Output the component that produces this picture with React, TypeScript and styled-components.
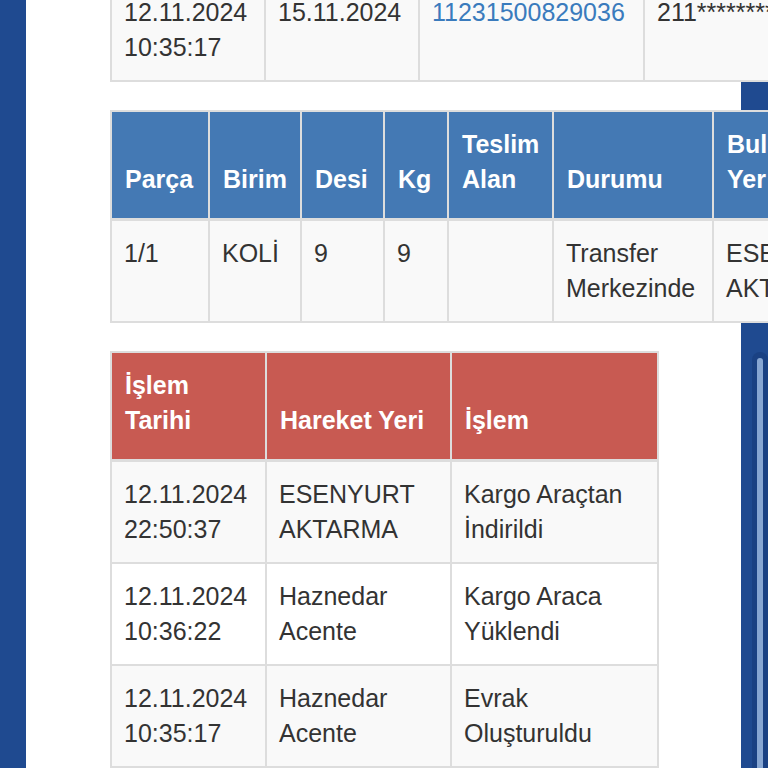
import React from "react";
import styled, { createGlobalStyle } from "styled-components";

const GlobalStyle = createGlobalStyle`
  html, body {
    margin: 0;
    padding: 0;
    overflow: hidden;
  }
  body {
    background: #1f4a90;
    font-family: "Liberation Sans", Arial, Helvetica, sans-serif;
    color: #333;
  }
  * { box-sizing: border-box; }
`;

const Page = styled.div`
  display: flex;
  width: 768px;
  height: 768px;
  overflow: hidden;
  background: #1f4a90;
`;

const LeftRail = styled.div`
  flex: 0 0 26px;
`;

const Main = styled.main`
  flex: 0 0 715px;
  min-width: 0;
  margin-top: -22px;
  padding-left: 84px;
  background: #ffffff;
  display: flex;
  flex-direction: column;
  align-items: flex-start;
  gap: 28px;
`;

const RightArea = styled.aside`
  flex: 1 1 auto;
  min-width: 0;
  padding-left: 11px;
  padding-top: 352px;
`;

const ScrollTrack = styled.div`
  width: 16px;
  height: 460px;
  padding: 6px 5px;
  border-radius: 8px;
  background: #1a4183;
`;

const ScrollThumb = styled.div`
  width: 6px;
  height: 100%;
  border-radius: 3px;
  background: #87a6d2;
`;

const Table = styled.table<{ $w: number }>`
  flex: 0 0 auto;
  width: ${(p) => p.$w}px;
  min-width: ${(p) => p.$w}px;
  table-layout: fixed;
  border-collapse: separate;
  border-spacing: 0;
  border-top: 2px solid #dddddd;
  border-left: 2px solid #dddddd;
  font-size: 25px;
  line-height: 35px;
`;

const HeadCell = styled.th<{ $w: number; $tone: "blue" | "red" }>`
  width: ${(p) => p.$w}px;
  padding: 15px 12px 21px 13px;
  vertical-align: bottom;
  text-align: left;
  font-weight: 700;
  color: #ffffff;
  background: ${(p) => (p.$tone === "blue" ? "#4479b4" : "#c85a52")};
  border-right: 2px solid #dddddd;
  border-bottom: 3px solid #dddddd;
`;

const Row = styled.tr<{ $striped: boolean }>`
  background: ${(p) => (p.$striped ? "#f9f9f9" : "#ffffff")};
`;

const Cell = styled.td<{ $w?: number }>`
  ${(p) => (p.$w ? `width: ${p.$w}px;` : "")}
  padding: 15px 12px 15px 12px;
  vertical-align: top;
  font-weight: 400;
  color: #333333;
  border-right: 2px solid #dddddd;
  border-bottom: 2px solid #dddddd;
  white-space: normal;
`;

const Link = styled.a`
  color: #3a7bbd;
  text-decoration: none;
`;

type Col = { label: string; w: number };

const shipmentCols = [154, 154, 225, 200];

const pieceCols: Col[] = [
  { label: "Parça", w: 98 },
  { label: "Birim", w: 92 },
  { label: "Desi", w: 83 },
  { label: "Kg", w: 64 },
  { label: "Teslim Alan", w: 105 },
  { label: "Durumu", w: 160 },
  { label: "Bulunduğu Yer", w: 170 },
];

const pieceRows = [
  ["1/1", "KOLİ", "9", "9", "", "Transfer Merkezinde", "ESENYURT AKTARMA"],
];

const moveCols: Col[] = [
  { label: "İşlem Tarihi", w: 155 },
  { label: "Hareket Yeri", w: 185 },
  { label: "İşlem", w: 207 },
];

const moveRows = [
  ["12.11.2024 22:50:37", "ESENYURT AKTARMA", "Kargo Araçtan İndirildi"],
  ["12.11.2024 10:36:22", "Haznedar Acente", "Kargo Araca Yüklendi"],
  ["12.11.2024 10:35:17", "Haznedar Acente", "Evrak Oluşturuldu"],
];

const sum = (a: number[]) => a.reduce((s, n) => s + n, 2);

function DataTable({
  cols,
  rows,
  tone,
}: {
  cols: Col[];
  rows: string[][];
  tone: "blue" | "red";
}) {
  return (
    <Table $w={sum(cols.map((c) => c.w))}>
      <thead>
        <tr>
          {cols.map((c) => (
            <HeadCell key={c.label} $w={c.w} $tone={tone}>
              {c.label}
            </HeadCell>
          ))}
        </tr>
      </thead>
      <tbody>
        {rows.map((r, i) => (
          <Row key={i} $striped={i % 2 === 0}>
            {r.map((v, j) => (
              <Cell key={j}>{v}</Cell>
            ))}
          </Row>
        ))}
      </tbody>
    </Table>
  );
}

export default function App() {
  return (
    <>
      <GlobalStyle />
      <Page>
        <LeftRail />
        <Main>
          <Table $w={sum(shipmentCols)}>
            <tbody>
              <Row $striped>
                <Cell $w={shipmentCols[0]}>12.11.2024 10:35:17</Cell>
                <Cell $w={shipmentCols[1]}>15.11.2024</Cell>
                <Cell $w={shipmentCols[2]}>
                  <Link href="#">11231500829036</Link>
                </Cell>
                <Cell $w={shipmentCols[3]}>211*********</Cell>
              </Row>
            </tbody>
          </Table>
          <DataTable cols={pieceCols} rows={pieceRows} tone="blue" />
          <DataTable cols={moveCols} rows={moveRows} tone="red" />
        </Main>
        <RightArea>
          <ScrollTrack>
            <ScrollThumb />
          </ScrollTrack>
        </RightArea>
      </Page>
    </>
  );
}
